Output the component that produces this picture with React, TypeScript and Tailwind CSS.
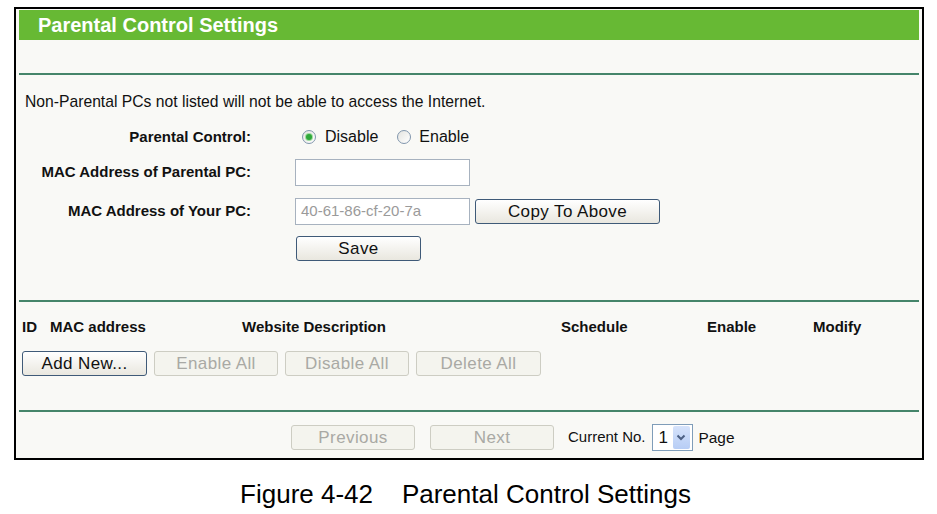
const FONT = { fontFamily: '"Liberation Sans", Arial, sans-serif' };

function Btn({ label, width, disabled }: { label: string; width: number; disabled?: boolean }) {
  return (
    <button
      type="button"
      style={{ width }}
      className={`h-[25px] rounded-[3px] border text-[17px] leading-none tracking-[0.4px] ${
        disabled
          ? 'border-[#cdcdc3] bg-[#f4f4ee] text-[#a9a9a4]'
          : 'border-[#3f5a78] bg-gradient-to-b from-white to-[#e9e7df] text-[#111]'
      }`}
    >
      {label}
    </button>
  );
}

function Radio({ checked }: { checked?: boolean }) {
  return (
    <span className="flex h-[14px] w-[14px] items-center justify-center rounded-full border border-[#8196ad] bg-gradient-to-br from-[#e4e4e0] to-white">
      {checked && (
        <span className="h-[6px] w-[6px] rounded-full bg-[#2ea83a] ring-1 ring-[#9fdc9f]" />
      )}
    </span>
  );
}

function Rule() {
  return <div className="mx-[3px] h-[2px] bg-[#45856a]" />;
}

function FormRow({ label, children, className }: { label: string; children?: React.ReactNode; className?: string }) {
  return (
    <div className={`flex items-center ${className ?? ''}`}>
      <div className="w-[235px] text-right text-[15px] font-bold text-[#111]">{label}</div>
      <div className="ml-[44px] flex items-center">{children}</div>
    </div>
  );
}

export default function App() {
  return (
    <div className="min-h-[514px] bg-white pt-[7px]" style={FONT}>
      <div className="ml-[14px] w-[910px] border-2 border-black bg-[#f9f9f6] pb-[8px] pt-[1px]">
        <div className="mx-[3px] flex h-[30px] items-center bg-[#67b934] pl-[19px] text-[20px] font-bold text-white">
          Parental Control Settings
        </div>

        <div className="mt-[33px]">
          <Rule />
        </div>

        <div className="mt-[17px] flex h-[20px] items-center pl-[9px] text-[15.7px] text-[#111]">
          Non-Parental PCs not listed will not be able to access the Internet.
        </div>

        <FormRow label="Parental Control:" className="mt-[14px] h-[22px]">
          <span className="ml-[7px]">
            <Radio checked />
          </span>
          <span className="ml-[9px] text-[16px] text-[#111]">Disable</span>
          <span className="ml-[19px]">
            <Radio />
          </span>
          <span className="ml-[8px] text-[16px] text-[#111]">Enable</span>
        </FormRow>

        <FormRow label="MAC Address of Parental PC:" className="mt-[11px] h-[27px]">
          <div className="h-[27px] w-[175px] border border-[#a7b2bf] bg-white" />
        </FormRow>

        <FormRow label="MAC Address of Your PC:" className="mt-[12px] h-[27px]">
          <div className="flex h-[27px] w-[175px] items-center border border-[#a7b2bf] bg-white pl-[5px] text-[15px] text-[#9a9a9a]">
            40-61-86-cf-20-7a
          </div>
          <span className="ml-[5px]">
            <Btn label="Copy To Above" width={185} />
          </span>
        </FormRow>

        <FormRow label="" className="mt-[11px] h-[25px]">
          <span className="ml-[1px]">
            <Btn label="Save" width={125} />
          </span>
        </FormRow>

        <div className="mt-[39px]">
          <Rule />
        </div>

        <div className="mt-[15px] flex h-[20px] items-center pl-[6px] text-[15px] font-bold text-[#111]">
          <span className="w-[28px]">ID</span>
          <span className="w-[192px]">MAC address</span>
          <span className="w-[319px]">Website Description</span>
          <span className="w-[146px]">Schedule</span>
          <span className="w-[106px]">Enable</span>
          <span>Modify</span>
        </div>

        <div className="mt-[14px] flex gap-[7px] pl-[6px]">
          <Btn label="Add New..." width={125} />
          <Btn label="Enable All" width={124} disabled />
          <Btn label="Disable All" width={124} disabled />
          <Btn label="Delete All" width={125} disabled />
        </div>

        <div className="mt-[34px]">
          <Rule />
        </div>

        <div className="mt-[13px] flex h-[25px] items-center pl-[275px]">
          <Btn label="Previous" width={124} disabled />
          <span className="ml-[15px]">
            <Btn label="Next" width={124} disabled />
          </span>
          <span className="ml-[14px] text-[15px] text-[#111]">Current No.</span>
          <div className="ml-[6px] flex h-[27px] w-[41px] items-center border border-[#7f9db9] bg-white">
            <span className="w-[20px] pl-[6px] text-[17px] text-[#111]">1</span>
            <span className="flex h-[23px] w-[17px] items-center justify-center rounded-[2px] bg-gradient-to-b from-[#d6e3fb] to-[#b7cdf5]">
              <svg width="10" height="7" viewBox="0 0 10 7">
                <path d="M1.5 1.5 L5 5 L8.5 1.5" fill="none" stroke="#4d6185" strokeWidth="2" />
              </svg>
            </span>
          </div>
          <span className="ml-[6px] text-[15.4px] text-[#111]">Page</span>
        </div>
      </div>

      <div className="mt-[20px] flex h-[28px] items-center justify-center whitespace-pre pr-[6px] text-[26px] text-black">
        {'Figure 4-42    Parental Control Settings'}
      </div>
    </div>
  );
}
